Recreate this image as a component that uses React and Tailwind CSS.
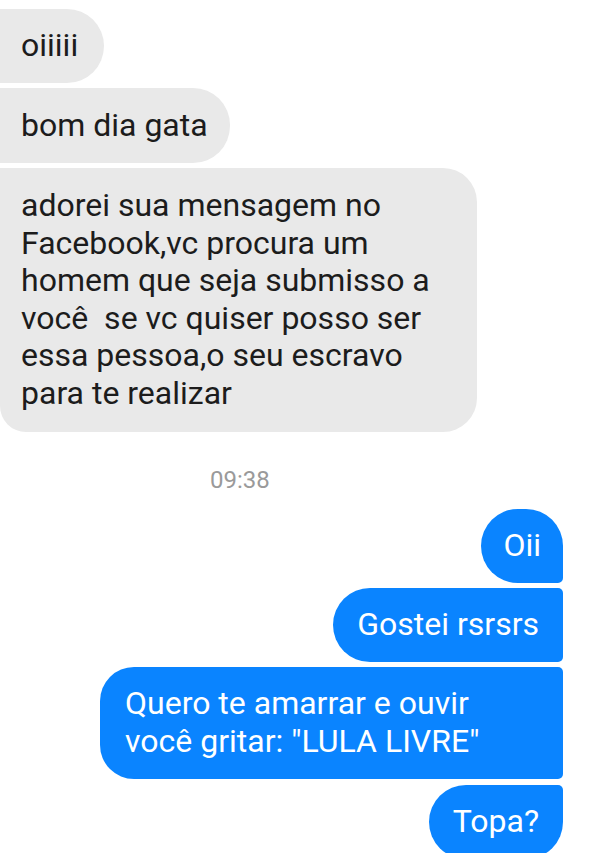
export default function App() {
  const font = { fontFamily: "Roboto, 'Noto Sans', sans-serif" };
  return (
    <div className="w-[612px] h-[853px] overflow-hidden bg-white" style={font}>
      <div className="flex flex-col pt-[9px] text-[32px] leading-[37.5px]">
        <div className="flex flex-col items-start gap-[5px]">
          <div className="bg-[#e9e9e9] text-[#1c1c1c] pl-[21px] pr-[26px] py-[18.25px] rounded-r-[37px]">
            oiiiii
          </div>
          <div className="bg-[#e9e9e9] text-[#1c1c1c] pl-[21px] pr-[22px] py-[18.5px] rounded-r-[37px]">
            bom dia gata
          </div>
          <div className="bg-[#e9e9e9] text-[#1c1c1c] pl-[21px] pr-[20px] py-[19.5px] w-[477px] rounded-r-[34px] rounded-bl-[26px] whitespace-nowrap">
            adorei sua mensagem no<br />
            Facebook,vc procura um<br />
            homem que seja submisso a<br />
            você&nbsp; se vc quiser posso ser<br />
            essa pessoa,o seu escravo<br />
            para te realizar
          </div>
        </div>
        <div className="mt-[36px] mb-[17px] h-[24px] leading-[24px] pl-[210px] text-[24px] text-[#9a9a9a]">
          09:38
        </div>
        <div className="flex flex-col items-end gap-[5px] pr-[49px] text-white">
          <div className="bg-[#0a84ff] px-[22px] py-[18.25px] rounded-l-[37px] rounded-tr-[37px] rounded-br-[5px]">
            Oii
          </div>
          <div className="bg-[#0a84ff] px-[24px] py-[18.25px] rounded-l-[37px] rounded-r-[5px]">
            Gostei rsrsrs
          </div>
          <div className="bg-[#0a84ff] pl-[25px] pr-[24px] py-[18.5px] w-[463px] rounded-l-[34px] rounded-r-[5px] whitespace-nowrap">
            Quero te amarrar e ouvir<br />
            você gritar: "LULA LIVRE"
          </div>
          <div className="mt-[1px] bg-[#0a84ff] px-[24px] py-[18.25px] rounded-l-[37px] rounded-tr-[5px] rounded-br-[37px]">
            Topa?
          </div>
        </div>
      </div>
    </div>
  );
}
